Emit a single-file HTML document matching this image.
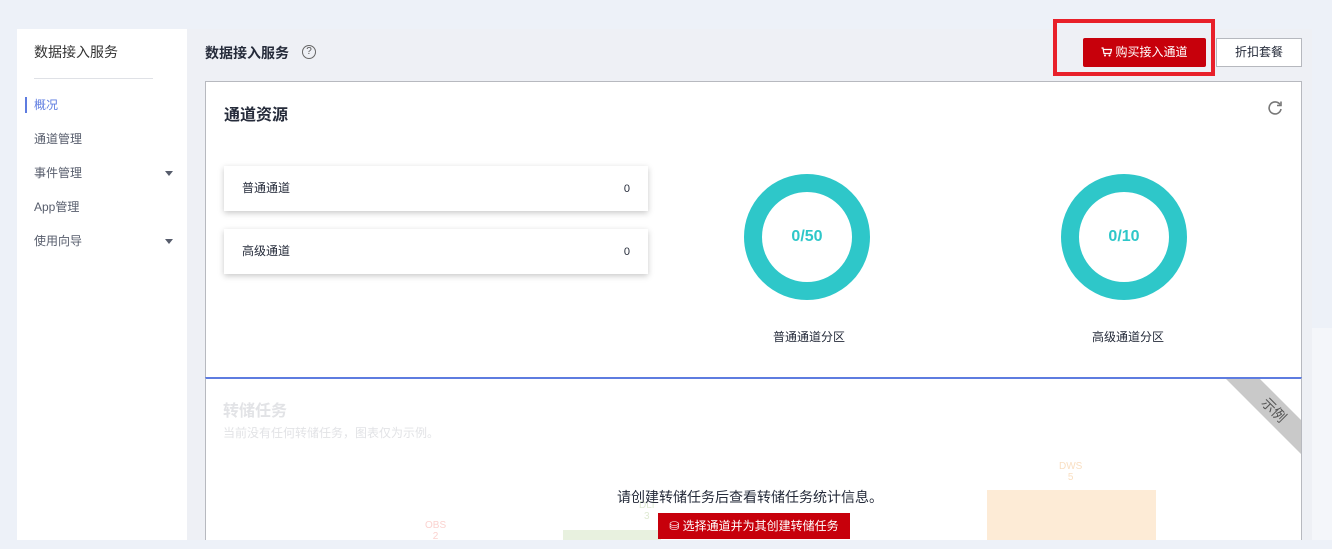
<!DOCTYPE html>
<html><head><meta charset="utf-8"><style>
*{box-sizing:border-box;margin:0;padding:0}
body{width:1332px;height:549px;overflow:hidden;background:#edf1f8;font-family:"Liberation Sans","Noto Sans CJK SC",sans-serif;position:relative;color:#252b3a}
.abs{position:absolute}
.side{left:17px;top:29px;width:170px;height:520px;background:#fff}
.main{left:187px;top:29px;width:1125px;height:511px;background:#eef0f5}
.nav{font-size:12px;color:#575d6c;left:34px;line-height:14px}
.tri{width:0;height:0;border-left:4px solid transparent;border-right:4px solid transparent;border-top:5px solid #575d6c}
.box{background:#fff;box-shadow:0 2px 6px rgba(0,0,0,.22);font-size:12px;height:45px;width:424px;left:224px}
.box span{line-height:14px}
</style></head><body>
<div class="abs side"></div>
<div class="abs" style="left:34px;top:42px;font-size:14px;color:#333">数据接入服务</div>
<div class="abs" style="left:34px;top:78px;width:119px;height:1px;background:#dfe1e6"></div>
<div class="abs" style="left:25px;top:97px;width:2px;height:16px;background:#5e7ce0"></div>
<div class="abs nav" style="top:98px;color:#5e7ce0">概况</div>
<div class="abs nav" style="top:132px">通道管理</div>
<div class="abs nav" style="top:166px">事件管理</div>
<div class="abs tri" style="left:165px;top:171px"></div>
<div class="abs nav" style="top:200px">App管理</div>
<div class="abs nav" style="top:234px">使用向导</div>
<div class="abs tri" style="left:165px;top:239px"></div>
<div class="abs main"></div>
<div class="abs" style="left:205px;top:43px;font-size:14px;font-weight:bold;color:#252b3a">数据接入服务</div>
<div class="abs" style="left:302px;top:45px;width:14px;height:14px;border:1.3px solid #666;border-radius:50%;font-size:10px;text-align:center;line-height:12px;color:#555">?</div>
<div class="abs" style="left:1053px;top:19px;width:162px;height:57px;border:4px solid #e8202a"></div>
<div class="abs" style="left:1083px;top:38px;width:123px;height:29px;background:#c7000b;border-radius:2px;color:#fff;font-size:12px;text-align:center;line-height:29px"><svg width="11" height="10" viewBox="0 0 11 10" style="vertical-align:-1px;margin-right:3px"><path d="M0.5 1H2L3 6.5H9.5L10.5 2.5H2.5" fill="none" stroke="#fff" stroke-width="1.2"/><circle cx="4" cy="8.5" r="1" fill="#fff"/><circle cx="8.5" cy="8.5" r="1" fill="#fff"/></svg>购买接入通道</div>
<div class="abs" style="left:1216px;top:38px;width:86px;height:29px;background:#fff;border:1px solid #b6b8be;font-size:12px;text-align:center;line-height:27px">折扣套餐</div>
<div class="abs" style="left:205px;top:81px;width:1097px;height:297px;background:#fff;border:1px solid #b7b9bf"></div>
<div class="abs" style="left:224px;top:101px;font-size:16px;font-weight:bold">通道资源</div>
<svg class="abs" style="left:1267px;top:100px" width="16" height="16" viewBox="0 0 16 16"><path d="M13 4.5A6 6 0 1 0 14 9" fill="none" stroke="#777" stroke-width="1.6"/><path d="M14 1.5V5.5H10" fill="none" stroke="#777" stroke-width="1.6"/></svg>
<div class="abs box" style="top:166px"><span class="abs" style="left:18px;top:15px">普通通道</span><span class="abs" style="right:18px;top:16px;font-size:11px">0</span></div>
<div class="abs box" style="top:229px"><span class="abs" style="left:18px;top:15px">高级通道</span><span class="abs" style="right:18px;top:16px;font-size:11px">0</span></div>
<div class="abs" style="left:744px;top:174px;width:126px;height:126px;border:18px solid #2ec7c9;border-radius:50%;text-align:center;line-height:90px;font-size:16px;font-weight:bold;color:#2ec7c9">0/50</div>
<div class="abs" style="left:1061px;top:174px;width:126px;height:126px;border:18px solid #2ec7c9;border-radius:50%;text-align:center;line-height:90px;font-size:16px;font-weight:bold;color:#2ec7c9">0/10</div>
<div class="abs" style="left:773px;top:328px;font-size:12px">普通通道分区</div>
<div class="abs" style="left:1092px;top:328px;font-size:12px">高级通道分区</div>
<div class="abs" style="left:205px;top:377px;width:1097px;height:165px;background:#fff;border:1px solid #b7b9bf;border-top:2px solid #5e7ce0;overflow:hidden">
 <div class="abs" style="left:968px;top:19px;width:200px;height:24px;background:#c9c9c9;transform:rotate(45deg);color:#555;font-size:14px;text-align:center;line-height:24px">示例</div>
</div>
<div class="abs" style="left:223px;top:397px;font-size:16px;font-weight:bold;color:#e2e3e6">转储任务</div>
<div class="abs" style="left:223px;top:424px;font-size:12px;color:#e2e3e6">当前没有任何转储任务，图表仅为示例。</div>
<div class="abs" style="left:987px;top:490px;width:169px;height:52px;background:#fdebd6"></div>
<div class="abs" style="left:563px;top:530px;width:98px;height:12px;background:#e8f1df"></div>
<div class="abs" style="left:1059px;top:461px;font-size:10px;color:#f9dfc2;text-align:center">DWS<br>5</div>
<div class="abs" style="left:639px;top:500px;font-size:10px;color:#dfead3;text-align:center">DLI<br>3</div>
<div class="abs" style="left:425px;top:520px;font-size:10px;color:#fbd2cf;text-align:center">OBS<br>2</div>
<div class="abs" style="left:617px;top:487px;font-size:14px">请创建转储任务后查看转储任务统计信息。</div>
<div class="abs" style="left:658px;top:513px;width:192px;height:26px;background:#c7000b;color:#fff;font-size:12px;text-align:center;line-height:26px">⛁ 选择通道并为其创建转储任务</div>
<div class="abs" style="left:0;top:540px;width:1332px;height:9px;background:#edf1f8"></div>
<div class="abs" style="left:1312px;top:328px;width:20px;height:212px;background:#f4f6fa"></div>
</body></html>
